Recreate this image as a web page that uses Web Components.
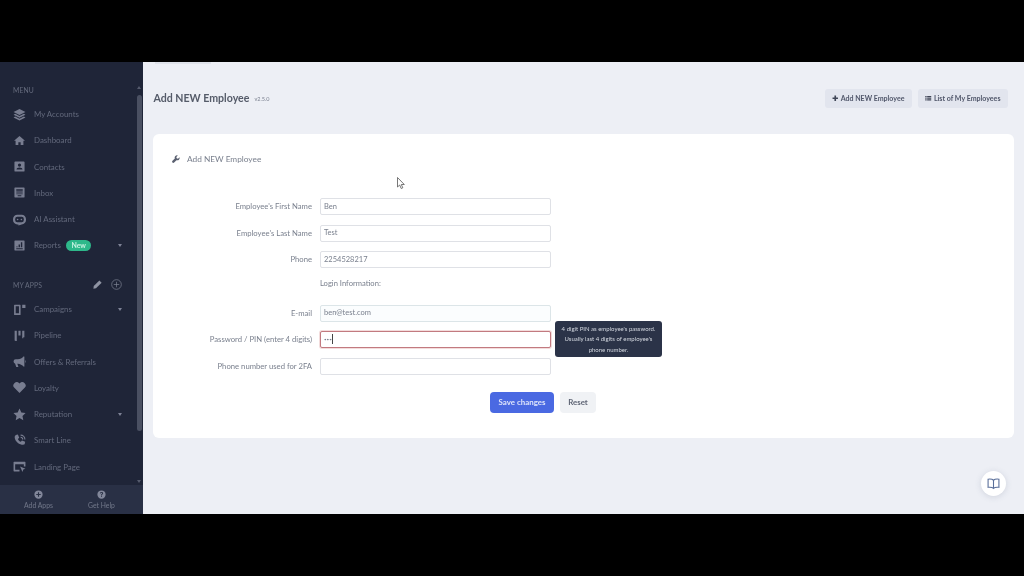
<!DOCTYPE html>
<html lang="en"><head><meta charset="utf-8"><title>Add NEW Employee</title>
<style>
html,body{margin:0;height:100%;background:#000;overflow:hidden}
body{font-family:"Lato","Liberation Sans",sans-serif}
</style></head><body>
<app-shell>
  <side-bar slot="side">
    <side-label>MENU</side-label>
    <nav-item style="margin-top:6px"><svg slot="icon" viewBox="0 0 24 24"><path d="M12 2 1 7.500 12 13l11-5.500zM4 10.800 1 12.500 12 18l11-5.500-3-1.700-8 4zM4 15.800 1 17.500 12 23l11-5.500-3-1.700-8 4z"/></svg>My Accounts</nav-item>
    <nav-item><svg slot="icon" viewBox="0 0 24 24" style="transform:scale(.85)"><path d="M12 2 0 12.500h3.500V22h6v-6h5v6h6v-9.500H24z"/></svg>Dashboard</nav-item>
    <nav-item><svg slot="icon" viewBox="0 0 24 24" style="transform:scale(.85)"><path fill-rule="evenodd" d="M3 1h18a2 2 0 0 1 2 2v18a2 2 0 0 1-2 2H3a2 2 0 0 1-2-2V3a2 2 0 0 1 2-2zM12 5.500a3.500 3.500 0 1 0 0 7 3.500 3.500 0 0 0 0-7zM5.500 18.500h13c0-3-2.500-4.500-6.500-4.500s-6.500 1.500-6.500 4.500z"/></svg>Contacts</nav-item>
    <nav-item><svg slot="icon" viewBox="0 0 24 24" style="transform:scale(.85)"><path fill-rule="evenodd" d="M2 1h20a1 1 0 0 1 1 1v20a1 1 0 0 1-1 1H2a1 1 0 0 1-1-1V2a1 1 0 0 1 1-1zM5 5v3h14V5zM5 10v2h14v-2zM5 14v2h14v-2zM8 18v2h8v-2z"/></svg>Inbox</nav-item>
    <nav-item><svg slot="icon" viewBox="0 0 24 24"><path fill-rule="evenodd" d="M8 3h8a8 8 0 0 1 8 8v2a8 8 0 0 1-8 8l-6 2v-2H8a8 8 0 0 1-8-8v-2a8 8 0 0 1 8-8zM8 7a4 4 0 0 0-4 4v2a4 4 0 0 0 4 4h8a4 4 0 0 0 4-4v-2a4 4 0 0 0-4-4zM8.500 10.500a1.500 1.500 0 0 1 1.500 1.500 1.500 1.500 0 0 1-3 0 1.500 1.500 0 0 1 1.500-1.500zM15.500 10.500a1.500 1.500 0 0 1 1.500 1.500 1.500 1.500 0 0 1-3 0 1.500 1.500 0 0 1 1.500-1.500z"/></svg>AI Assistant</nav-item>
    <nav-item caret><svg slot="icon" viewBox="0 0 24 24" style="transform:scale(.85)"><path fill-rule="evenodd" d="M2 1h20a1 1 0 0 1 1 1v20a1 1 0 0 1-1 1H2a1 1 0 0 1-1-1V2a1 1 0 0 1 1-1zM5 18v2h14v-2zM5 14v2h3v-2zM10 10v6h3v-6zM15 5v11h3V5z"/></svg>Reports<new-badge slot="after">New</new-badge></nav-item>
    <side-label style="margin-top:20.500px" tools>MY APPS</side-label>
    <nav-item style="margin-top:6px" caret><svg slot="icon" viewBox="0 0 24 24"><path fill-rule="evenodd" d="M3 3h10a1 1 0 0 1 1 1v17a1 1 0 0 1-1 1H3a1 1 0 0 1-1-1V4a1 1 0 0 1 1-1zM5 6v13h6V6zM17 3h6v6h-6z"/></svg>Campaigns</nav-item>
    <nav-item><svg slot="icon" viewBox="0 0 24 24"><path d="M3 3h4v19H5l-2-1zM10 3h4v9h-4zM17 3h4v12h-2v2h-2z"/></svg>Pipeline</nav-item>
    <nav-item><svg slot="icon" viewBox="0 0 24 24"><path d="M21 3v18l-1 .500C17 18 13 16.500 9 16H8l2 6H6l-2-6a4 4 0 0 1-3-4 4 4 0 0 1 4-4h4c4-.300 8-2 11-5.500zM23 10a2 2 0 0 1 0 4z"/></svg>Offers &amp; Referrals</nav-item>
    <nav-item><svg slot="icon" viewBox="0 0 24 24"><path d="M12 22 2.500 12.500a6 6 0 0 1 0-8.500 6.500 6.500 0 0 1 9 0l.5.500.5-.5a6.500 6.500 0 0 1 9 0 6 6 0 0 1 0 8.500z"/></svg>Loyalty</nav-item>
    <nav-item caret><svg slot="icon" viewBox="0 0 24 24"><path d="m12 1 3.400 7.200 7.800 1-5.700 5.400 1.500 7.800L12 18.600l-7 3.800 1.500-7.800L.8 9.200l7.800-1z"/></svg>Reputation</nav-item>
    <nav-item><svg slot="icon" viewBox="0 0 24 24"><path d="M5 2 9 1l2.500 6L9 9c1 2.500 3 4.500 5.500 5.500l2-2.500 6 2.500-1 4.500C18 22 3 17 3 5zM14 1a9 9 0 0 1 9 9h-2a7 7 0 0 0-7-7zM14 5a5 5 0 0 1 5 5h-2a3 3 0 0 0-3-3z"/></svg>Smart Line</nav-item>
    <nav-item><svg slot="icon" viewBox="0 0 24 24"><path fill-rule="evenodd" d="M2 3h20a1 1 0 0 1 1 1v8h-3V8H4v10h8v3H2a1 1 0 0 1-1-1V4a1 1 0 0 1 1-1zM13 12l10 4-4 1.500L17.500 22z"/></svg>Landing Page</nav-item>
    <side-foot slot="foot">
      <foot-link><svg slot="icon" viewBox="0 0 24 24"><path fill-rule="evenodd" d="M12 1a11 11 0 1 1 0 22 11 11 0 0 1 0-22zM10.500 6v4.500H6v3h4.500V18h3v-4.500H18v-3h-4.500V6z"/></svg>Add Apps</foot-link>
      <foot-link><svg slot="icon" viewBox="0 0 24 24"><path fill-rule="evenodd" d="M12 1a11 11 0 1 1 0 22 11 11 0 0 1 0-22zM12 5c-2.500 0-4 1.500-4.300 3.500l2.500.5c.2-1 .8-1.600 1.800-1.600s1.700.5 1.700 1.300c0 1.800-3 1.800-3 5h2.600c0-2 3-2.200 3-5.200C16.300 6.300 14.500 5 12 5zM10.700 15.500v2.800h2.700v-2.800z"/></svg>Get Help</foot-link>
    </side-foot>
  </side-bar>
  <page-head slot="main">
    <span slot="title">Add NEW Employee</span><span slot="ver">v2.5.0</span>
    <head-button slot="actions"><svg slot="icon" viewBox="0 0 24 24"><path d="M9 2h6v7h7v6h-7v7H9v-7H2V9h7z"/></svg>Add NEW Employee</head-button>
    <head-button slot="actions"><svg slot="icon" viewBox="0 0 24 24"><path d="M1 4h5v4H1zM8 4h15v4H8zM1 10h5v4H1zM8 10h15v4H8zM1 16h5v4H1zM8 16h15v4H8z"/></svg>List of My Employees</head-button>
  </page-head>
  <form-card slot="main">
    <svg slot="icon" viewBox="0 0 24 24"><path d="M22.500 6.500 18 11l-4-1-1-4 4.500-4.500a7 7 0 0 0-9 9L1.500 17.500a3.500 3.500 0 0 0 5 5l7-7a7 7 0 0 0 9-9z"/></svg>
    <span slot="title">Add NEW Employee</span>
    <form-row label="Employee's First Name" value="Ben"></form-row>
    <form-row label="Employee's Last Name" value="Test"></form-row>
    <form-row label="Phone" value="2254528217"></form-row>
    <form-row note="Login Information:"></form-row>
    <form-row label="E-mail" value="ben@test.com" tint></form-row>
    <form-row label="Password / PIN (enter 4 digits)" value="•••" focus>
      <tool-tip>4 digit PIN as employee's password. Usually last 4 digits of employee's phone number.</tool-tip>
    </form-row>
    <form-row label="Phone number used for 2FA"></form-row>
    <form-actions></form-actions>
  </form-card>
  <float-extras slot="main"></float-extras>
</app-shell>
<script>
function el(name, css, html){
  customElements.define(name, class extends HTMLElement{
    connectedCallback(){
      if(this.shadowRoot) return;
      const r=this.attachShadow({mode:'open'});
      r.innerHTML='<style>'+css+'</style>'+(typeof html==='function'?html(this):html);
    }
  });
}
el('app-shell',`
:host{display:grid;grid-template-rows:62px 452px 62px;height:576px;width:1024px;background:#000;filter:blur(.55px)}
.app{grid-row:2;display:grid;grid-template-columns:143px 1fr;background:#edeff5;min-height:0;overflow:hidden}
.main{position:relative;display:flex;flex-direction:column;min-width:0}
.tab{position:absolute;left:12px;top:0;width:56px;height:2px;background:#dfe2ea}
`,`<div></div><div class="app"><slot name="side"></slot><div class="main"><div class="tab"></div><slot name="main"></slot></div></div>`);
el('side-bar',`
:host{display:flex;flex-direction:column;background:#1f2538;min-height:0;position:relative}
.scroll{flex:1;min-height:0;overflow:hidden;padding-top:22px;display:flex;flex-direction:column}
.bar{position:absolute;right:1.500px;top:33px;width:5px;height:336px;background:#4a5062;border-radius:3px}
.up,.down{position:absolute;right:2px;width:0;height:0;border:2px solid transparent}
.up{top:24px;border-bottom:3px solid #555b6d;border-top:0}
.down{bottom:31px;border-top:3px solid #555b6d;border-bottom:0}
`,`<div class="scroll"><slot></slot></div><slot name="foot"></slot><div class="bar"></div><div class="up"></div><div class="down"></div>`);
el('side-label',`
:host{display:flex;align-items:center;height:11px;padding:0 21px 0 13px;font-size:6.800px;color:#666c7e;letter-spacing:.1px}
.sp{flex:1}svg{width:9px;height:9px;fill:#8f94a3}
.plus{width:11px;height:11px;margin-left:9px;fill:none;stroke:#7f8494;stroke-width:1.500}
`,h=>`<slot></slot><span class="sp"></span>`+(h.hasAttribute('tools')?`<svg viewBox="0 0 24 24"><path d="M17 1l6 6L8 22l-7 1 1-7z"/></svg><svg class="plus" viewBox="0 0 24 24"><circle cx="12" cy="12" r="10.500"/><path d="M12 6v12M6 12h12"/></svg>`:''));
el('nav-item',`
:host{display:flex;align-items:center;height:26.250px;flex:none;padding:0 21px 0 13px;font-size:7.900px;color:#63697c;white-space:nowrap}
.i{width:13px;height:13px;margin-right:8px;display:flex}
::slotted(svg){width:13px;height:13px;fill:#787d90}
.sp{flex:1}
.c{width:0;height:0;border:2.500px solid transparent;border-top:3px solid #7d8295;border-bottom:0}
.a{display:inline-flex;margin-left:5px}
`,h=>`<span class="i"><slot name="icon"></slot></span><slot></slot><span class="a"><slot name="after"></slot></span><span class="sp"></span>`+(h.hasAttribute('caret')?'<span class="c"></span>':''));
el('new-badge',`:host{display:inline-block;background:#2eb88a;color:#c9f2e2;font-size:7px;font-weight:700;line-height:11px;padding:0 5.500px;border-radius:6px}`,`<slot></slot>`);
el('side-foot',`:host{display:grid;grid-template-columns:1fr 1fr;height:29px;background:#293045;padding:0 10px 0 7px;box-sizing:border-box;flex:none}`,`<slot></slot>`);
el('foot-link',`
:host{display:flex;flex-direction:column;align-items:center;padding-top:4.500px;font-size:6.800px;color:#72788a;white-space:nowrap;line-height:9px;gap:2px}
::slotted(svg){width:9px;height:9px;fill:#82879a}
`,`<slot name="icon"></slot><slot></slot>`);
el('page-head',`
:host{display:flex;align-items:center;height:72px;padding:0 6px 0 10.500px;box-sizing:border-box;flex:none}
.t{font-size:10.600px;font-weight:700;color:#555b69;white-space:nowrap}
.v{font-size:5.500px;color:#7b8090;margin-left:5px;margin-top:2px}
.sp{flex:1}
.acts{display:flex;gap:6px;margin-right:10px}
`,`<span class="t"><slot name="title"></slot></span><span class="v"><slot name="ver"></slot></span><span class="sp"></span><span class="acts"><slot name="actions"></slot></span>`);
el('head-button',`
:host{display:inline-flex;align-items:center;height:19px;padding:0 7.500px;background:#e2e5ee;border-radius:3px;font-size:7.050px;font-weight:700;color:#50566a;white-space:nowrap}
::slotted(svg){width:6.500px;height:6.500px;margin-right:2px;fill:#3f4556}
`,`<slot name="icon"></slot><slot></slot>`);
el('form-card',`
:host{display:block;margin:0 10px;height:304px;background:#fff;border-radius:6px;box-sizing:border-box;flex:none}
.h{display:flex;align-items:center;height:64px;padding-left:19px;box-sizing:border-box;padding-bottom:14.500px;font-size:8.300px;color:#7a808e}
::slotted(svg){width:8px;height:8px;margin-right:7px;fill:#5a6070}
.rows{display:flex;flex-direction:column;gap:9.700px}
`,`<div class="h"><slot name="icon"></slot><slot name="title"></slot></div><div class="rows"><slot></slot></div>`);
el('form-row',`
:host{display:grid;grid-template-columns:159px 231px;column-gap:8px;height:17px;align-items:center;position:relative;font-size:7.700px;color:#7a808e;white-space:nowrap}
.l{text-align:right;padding-bottom:1px}
.f{box-sizing:border-box;height:17px;border:1px solid #dfe1e6;border-radius:2px;background:#fff;padding:0 3px 1px;line-height:15px;font-size:7.500px;color:#7a808e;display:flex;align-items:center}
.tint{background:#fbfdfe;border-color:#dce5e8}
.focus{border-color:#c27a80;box-shadow:0 0 0 1px #f3dcdc;font-size:4.500px}
.car{width:1px;height:10px;background:#444;margin-left:0}
.n{font-size:7.600px;position:relative;top:-4px}
`,h=>{
  const a=k=>(h.getAttribute(k)||'').replace(/&/g,'&amp;').replace(/</g,'&lt;');
  if(h.hasAttribute('note')) return `<span></span><span class="n">${a('note')}</span>`;
  const c=(h.hasAttribute('tint')?' tint':'')+(h.hasAttribute('focus')?' focus':'');
  return `<span class="l">${a('label')}</span><div class="f${c}">${a('value')}${h.hasAttribute('focus')?'<i class="car"></i>':''}</div><slot></slot>`;
});
el('tool-tip',`
:host{position:absolute;left:402px;top:-10px;width:107px;height:36px;box-sizing:border-box;background:#2b3348;border-radius:3px;color:#d4d8e0;font-size:6px;line-height:10.500px;text-align:center;padding:2.500px 4px;white-space:normal;z-index:2}
`,`<slot></slot>`);
el('form-actions',`
:host{display:flex;gap:6px;padding-left:337px;margin-top:7px}
.s,.r{height:21px;border-radius:4px;display:flex;align-items:center;justify-content:center;font-size:7.900px;font-weight:700}
.s{width:64px;background:#4a69e2;color:#dfe5fb}
.r{width:36px;background:#f0f2f5;color:#5f6575}
`,`<span class="s">Save changes</span><span class="r">Reset</span>`);
el('float-extras',`
:host{display:block}
.cur{position:absolute;left:254px;top:115px;width:8px;height:12px}
.fab{position:absolute;left:838px;top:409px;width:25px;height:25px;border-radius:50%;background:#fff;box-shadow:0 1px 6px rgba(80,90,120,.18);display:flex;align-items:center;justify-content:center}
.fab svg{width:13px;height:13px;fill:none;stroke:#5a6f9a;stroke-width:2}
`,`<svg class="cur" viewBox="0 0 8 12"><path d="M.5.500v9.500l2.200-2 1.500 3.500 1.600-.7-1.500-3.300h3z" fill="#fff" stroke="#555" stroke-width=".8"/></svg>
<div class="fab"><svg viewBox="0 0 24 24"><path d="M12 6C10 4 6 3.500 2 4v15c4-.5 8 0 10 2 2-2 6-2.500 10-2V4c-4-.5-8 0-10 2zM12 6v15"/></svg></div>`);
</script>
</body></html>
